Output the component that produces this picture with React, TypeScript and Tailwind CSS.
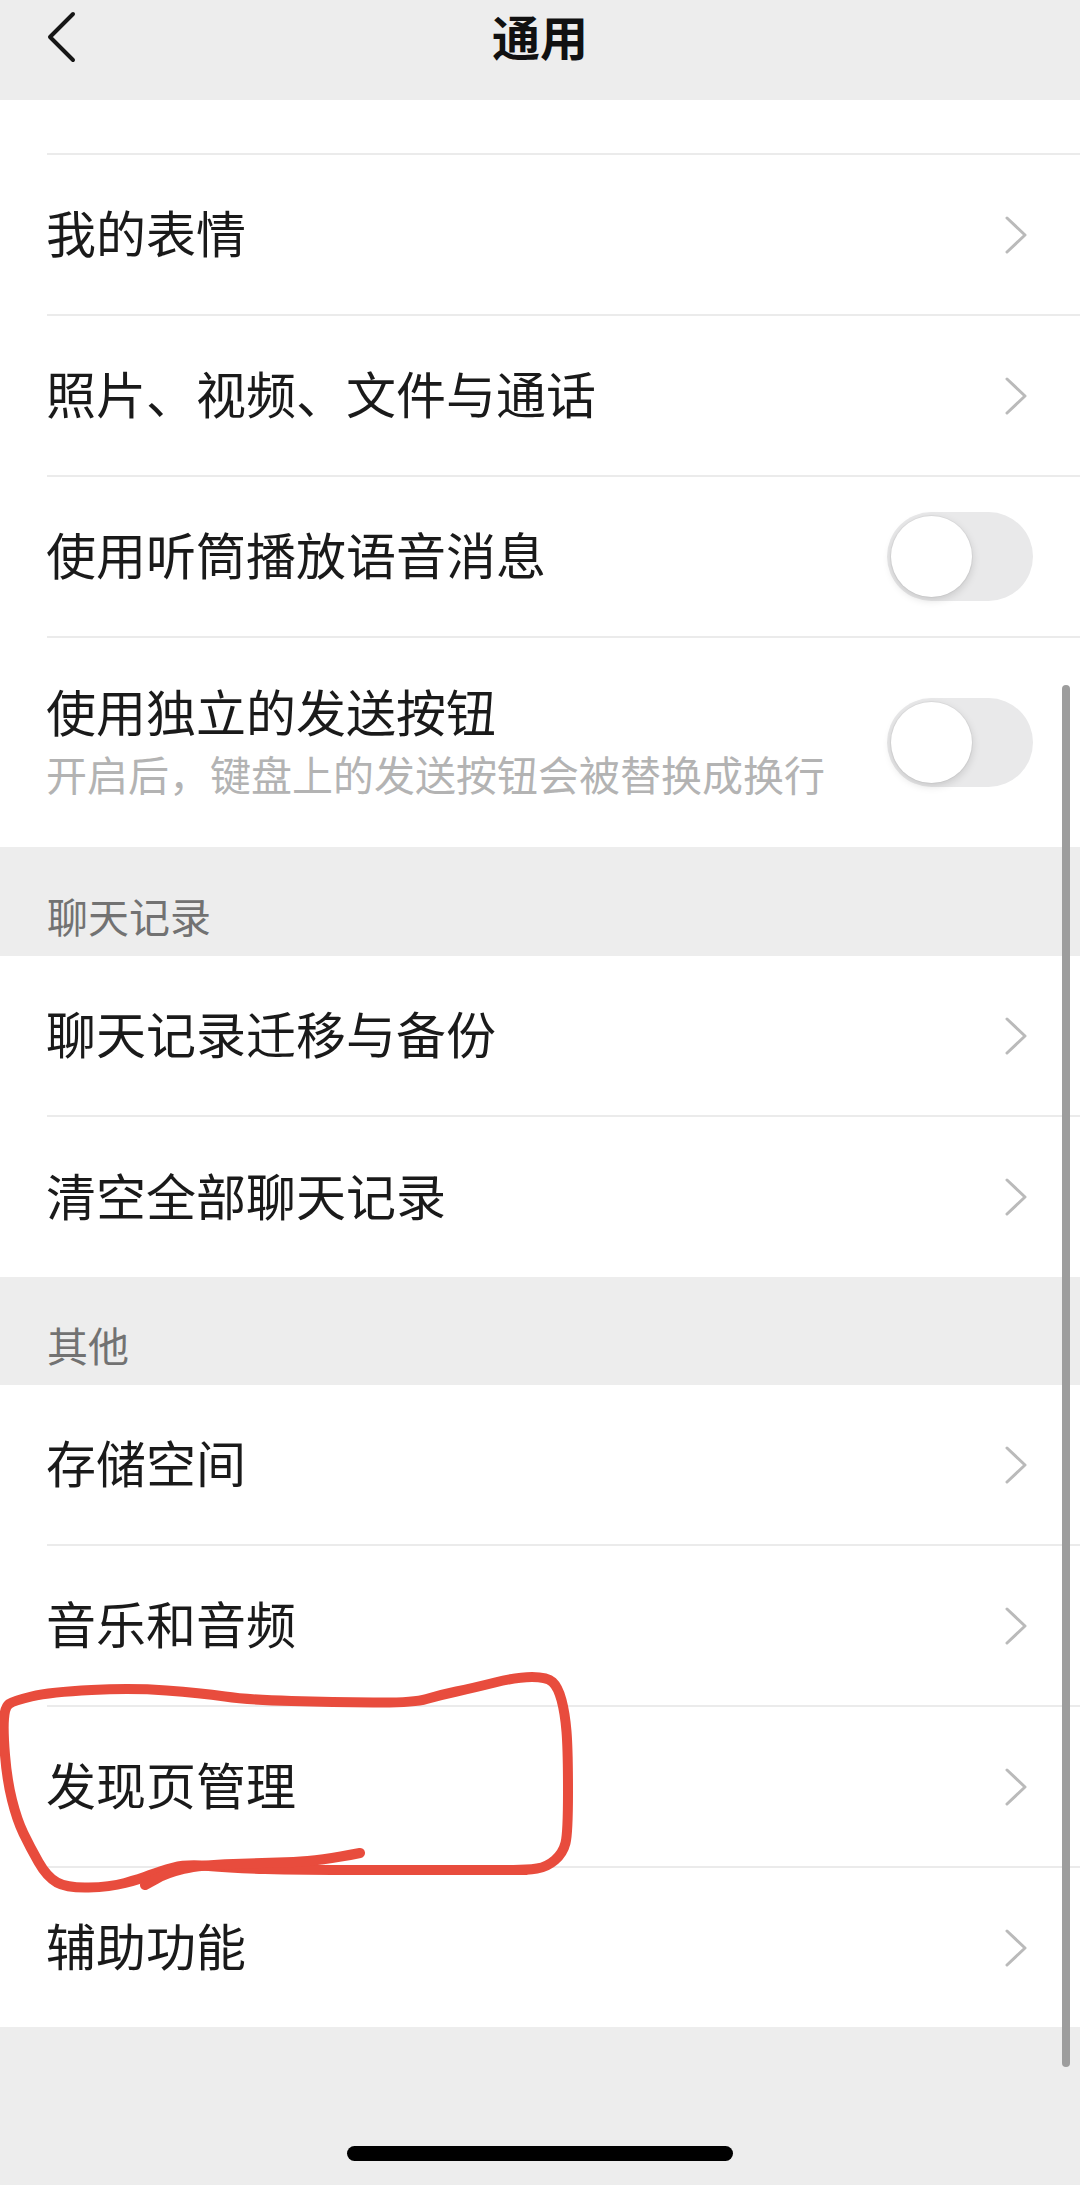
import React from 'react';

type Pt = [number, number];

// smooth a hand-drawn stroke through midpoints
const smoothPath = (pts: Pt[]) => {
    let d = `M${pts[0][0]},${pts[0][1]}`;
    for (let i = 1; i < pts.length - 1; i++) {
        const [x, y] = pts[i];
        const mx = (x + pts[i + 1][0]) / 2;
        const my = (y + pts[i + 1][1]) / 2;
        d += ` Q${x},${y} ${mx},${my}`;
    }
    const last = pts[pts.length - 1];
    return d + ` L${last[0]},${last[1]}`;
};

const loop: Pt[] = [
    [527, 1870], [420, 1870], [300, 1870], [230, 1868], [187, 1864], [160, 1871], [140, 1879],
    [110, 1887], [67, 1888], [47, 1877], [30, 1847], [17, 1820], [7, 1780], [3, 1730], [5, 1707],
    [13, 1701], [50, 1692], [133, 1688], [200, 1693], [250, 1700], [333, 1702], [413, 1703],
    [440, 1695], [473, 1688], [517, 1677], [547, 1677], [558, 1687], [565, 1713], [568, 1750],
    [568, 1833], [563, 1853], [547, 1867], [527, 1870], [500, 1870],
];

const tail: Pt[] = [[360, 1853], [320, 1861], [267, 1863], [200, 1865], [167, 1873], [145, 1885]];

const Chevron = () => (
    <svg width="24" height="40" viewBox="0 0 24 40" fill="none">
        <polyline points="3,3 21,20 3,37" stroke="#bababa" strokeWidth="3" strokeLinecap="round" strokeLinejoin="round" />
    </svg>
);

const Separator = () => (
    <div className="h-[2px] bg-white">
        <div className="ml-[47px] h-full bg-[#ebebeb]" />
    </div>
);

type RowProps = { label: string; h?: string };

const Row: React.FC<RowProps> = ({ label, h = 'h-[159px]' }) => (
    <div className={`flex items-center justify-between bg-white pl-[46px] pr-[52px] ${h}`}>
        <span className="pb-[7px] text-[50px] leading-none text-[#1a1a1a]">{label}</span>
        <Chevron />
    </div>
);

const Toggle = () => (
    <div className="h-[89px] w-[146px] rounded-full bg-[#e9e9ea] p-[4px]">
        <div className="h-[81px] w-[81px] rounded-full bg-white shadow-[0_3px_8px_rgba(0,0,0,0.15),0_0_0_1px_rgba(0,0,0,0.04)]" />
    </div>
);

const SectionTitle = ({ title, h }: { title: string; h: string }) => (
    <div className={`flex items-end bg-[#ededed] pb-[20px] pl-[47px] ${h}`}>
        <span className="text-[41px] leading-none text-[#727272]">{title}</span>
    </div>
);

export default function App() {
    return (
        <div className="relative h-[2185px] w-[1080px] overflow-hidden bg-[#ededed] font-['Noto_Sans_CJK_SC','Noto_Sans',sans-serif]">
            {/* nav bar */}
            <div className="grid h-[100px] grid-cols-[1fr_auto_1fr] items-start bg-[#ededed]">
                <div className="flex h-[74px] items-center pl-[44px]">
                    <svg width="36" height="54" viewBox="0 0 36 54" fill="none">
                        <polyline points="29,4 6,27 29,50" stroke="#161616" strokeWidth="4" strokeLinecap="round" strokeLinejoin="round" />
                    </svg>
                </div>
                <div className="flex h-[70px] items-center">
                    <span className="text-[48px] font-semibold leading-none text-[#111]">通用</span>
                </div>
                <div />
            </div>

            <div className="h-[53px] bg-white" />
            <Separator />
            <Row label="我的表情" />
            <Separator />
            <Row label="照片、视频、文件与通话" />
            <Separator />
            <div className="flex h-[159px] items-center justify-between bg-white pl-[46px] pr-[47px]">
                <span className="pb-[7px] text-[50px] leading-none text-[#1a1a1a]">使用听筒播放语音消息</span>
                <Toggle />
            </div>
            <Separator />
            <div className="flex h-[209px] items-center justify-between bg-white pl-[46px] pr-[47px]">
                <div className="flex flex-col gap-[18px] pb-[6px]">
                    <span className="text-[50px] leading-none text-[#1a1a1a]">使用独立的发送按钮</span>
                    <span className="text-[41px] leading-none text-[#b3b3b3]">开启后，键盘上的发送按钮会被替换成换行</span>
                </div>
                <Toggle />
            </div>

            <SectionTitle title="聊天记录" h="h-[109px]" />
            <Row label="聊天记录迁移与备份" />
            <Separator />
            <Row label="清空全部聊天记录" h="h-[160px]" />

            <SectionTitle title="其他" h="h-[108px]" />
            <Row label="存储空间" />
            <Separator />
            <Row label="音乐和音频" />
            <Separator />
            <Row label="发现页管理" />
            <Separator />
            <Row label="辅助功能" />

            <div className="flex justify-center pt-[119px]">
                <div className="h-[15px] w-[386px] rounded-full bg-black" />
            </div>

            {/* scroll indicator */}
            <div className="absolute left-[1062px] top-[685px] h-[1382px] w-[8px] rounded-full bg-[#9d9d9d]" />

            {/* red hand-drawn mark */}
            <svg className="pointer-events-none absolute left-0 top-0" width="1080" height="2185" viewBox="0 0 1080 2185" fill="none">
                <path d={smoothPath(loop)} stroke="#e84c3d" strokeWidth="10" strokeLinecap="round" strokeLinejoin="round" />
                <path d={smoothPath(tail)} stroke="#e84c3d" strokeWidth="10" strokeLinecap="round" strokeLinejoin="round" />
            </svg>
        </div>
    );
}
